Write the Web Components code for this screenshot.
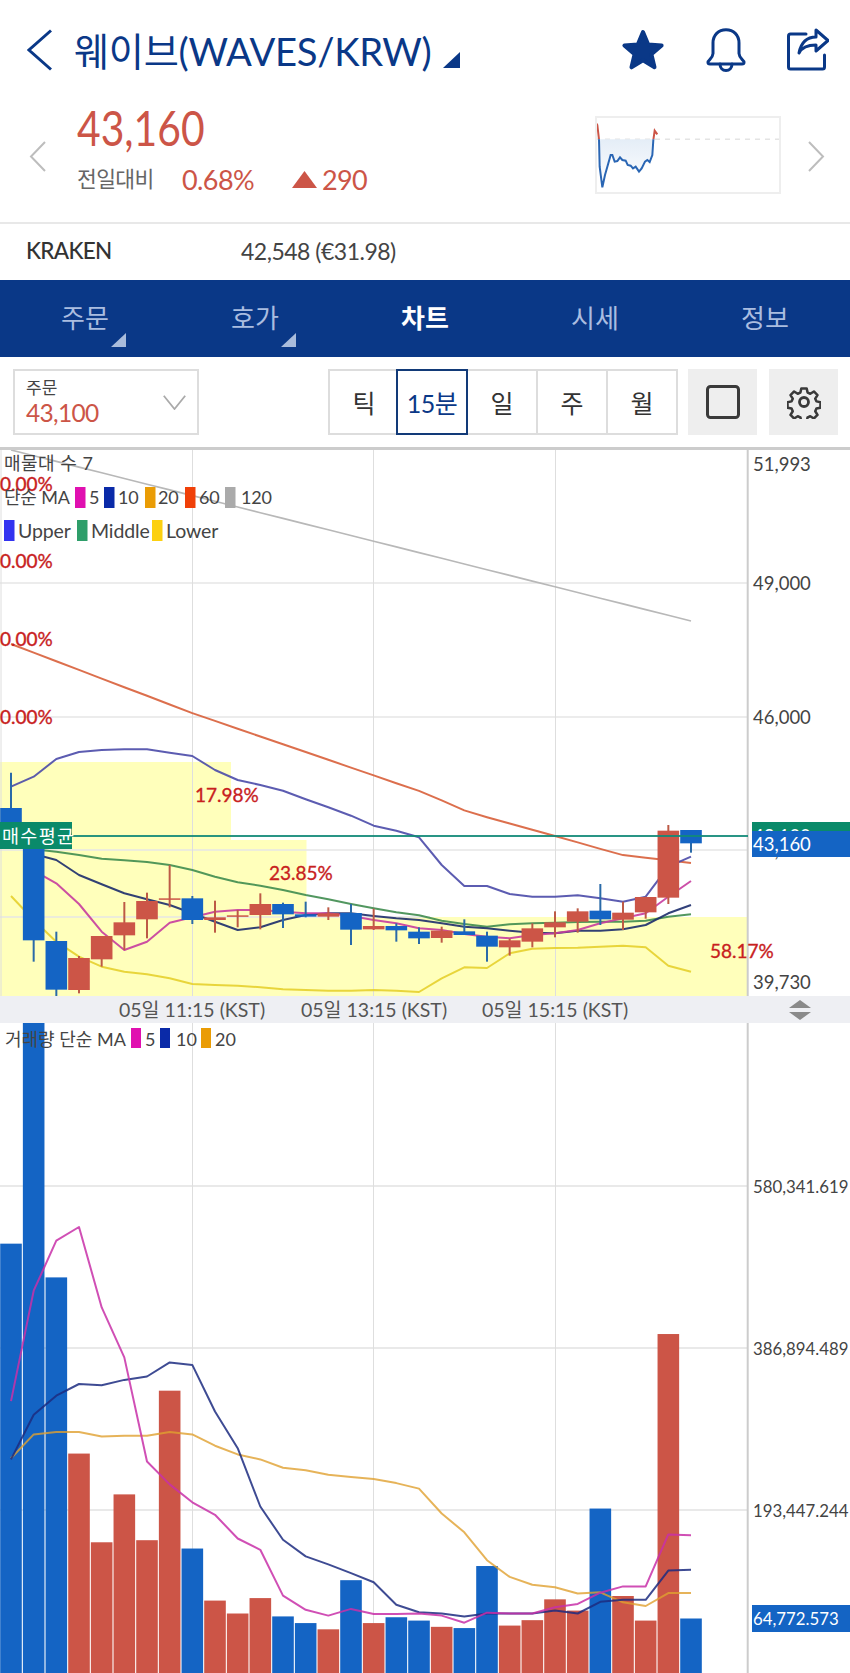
<!DOCTYPE html>
<html lang="ko">
<head>
<meta charset="utf-8">
<title>웨이브 차트</title>
<style>
  html, body { margin: 0; padding: 0; background: #fff; }
  body { width: 850px; height: 1673px; overflow: hidden; font-family: Lato, "Noto Sans CJK KR", sans-serif; }
</style>
</head>
<body>
<coin-header name="웨이브(WAVES/KRW)"></coin-header>
<price-summary></price-summary>
<exchange-row exchange="KRAKEN" value="42,548 (€31.98)"></exchange-row>
<tab-nav></tab-nav>
<chart-toolbar></chart-toolbar>
<price-chart></price-chart>
<time-strip></time-strip>
<volume-chart></volume-chart>

<script>
const FONT = 'Lato, "Noto Sans CJK KR", sans-serif';
const RED = '#cc5547', BLUE = '#1464c4', NAVY = '#0a3887';
const cx = i => 11 + 22.667 * i;

function define(name, render) {
  customElements.define(name, class extends HTMLElement {
    connectedCallback() {
      if (this.shadowRoot) return;
      this.attachShadow({ mode: 'open' }).innerHTML = render(this);
    }
  });
}

define('coin-header', el => `
<style>
  :host { display: flex; align-items: center; height: 100px; padding: 0 21px 0 27px; box-sizing: border-box; color: ${NAVY}; font-family: ${FONT}; }
  .title { margin-left: 22px; font-size: 38.2px; line-height: 44px; letter-spacing: -.3px; white-space: nowrap; position: relative; top: 1px; }
  .tri { margin: 19px 0 0 11px; }
  .icons { margin-left: auto; display: flex; align-items: center; gap: 41px; }
  svg { display: block; }
</style>
<svg width="25" height="42" viewBox="0 0 25 42" fill="none" stroke="${NAVY}" stroke-width="3"><path d="M24 1.5 2 21l22 19.5"/></svg>
<span class="title">${el.getAttribute('name')}</span>
<svg class="tri" width="17" height="16" viewBox="0 0 17 16"><path d="M17 0v16H0z" fill="${NAVY}"/></svg>
<div class="icons">
  <svg width="44" height="44" viewBox="0 0 44 44"><path d="M22 4 27.2 16.4 40.6 17.5 30.4 26.2 33.5 39.3 22 32.4 10.5 39.3 13.6 26.2 3.4 17.5 16.8 16.4z" fill="${NAVY}" stroke="${NAVY}" stroke-width="4" stroke-linejoin="round"/></svg>
  <svg width="40" height="44" viewBox="0 0 40 44" fill="none" stroke="${NAVY}" stroke-width="3" stroke-linecap="round" stroke-linejoin="round"><path d="M2 34.5c0-3 4.5-3 5-9V15C7 7 12.5 1.8 20 1.8S33 7 33 15v10.5c.5 6 5 6 5 9 0 1-.8 1.5-2 1.5H4c-1.2 0-2-.5-2-1.5z"/><path d="M14 36c0 4 2.5 6.5 6 6.5s6-2.5 6-6.5"/></svg>
  <svg width="42" height="44" viewBox="0 0 42 44" fill="none" stroke="${NAVY}" stroke-width="3" stroke-linecap="round" stroke-linejoin="round"><path d="M19 6H3.5C2.2 6 1.5 6.8 1.5 8v31c0 1.2.7 2 2 2h32c1.2 0 2-.8 2-2V27"/><path d="M12 25C14 15 20 9 29 9V2L41 12.5 29 23v-6C21 17 15 19 12 25z"/></svg>
</div>`);

define('price-summary', () => `
<style>
  :host { display: flex; align-items: center; height: 124px; box-sizing: border-box; font-family: ${FONT}; border-bottom: 2px solid #e8e8e8; padding: 0 25px 10px 29px; }
  .col { margin: -15px 0 0 31px; display: flex; flex-direction: column; gap: 11px; }
  .price { color: ${RED}; font-size: 48px; line-height: 50px; font-weight: 400; transform: scaleX(.85); transform-origin: left center; }
  .sub { display: flex; align-items: center; height: 30px; color: ${RED}; font-size: 27px; font-weight: 400; }
  .lab { color: #666; font-size: 21.5px; width: 105px; letter-spacing: -.6px; position: relative; top: -2px; }
  .pct { width: 110px; letter-spacing: -.6px; }
  .up { margin-right: 5px; }
  .mini { margin-left: auto; margin-right: 27px; margin-top: -2px; display: block; }
  svg { display: block; }
</style>
<svg width="17" height="31" viewBox="0 0 17 31" fill="none" stroke="#bdbdbd" stroke-width="2"><path d="M16 1 2 15.5 16 30"/></svg>
<div class="col">
  <div class="price">43,160</div>
  <div class="sub"><span class="lab">전일대비</span><span class="pct">0.68%</span>
    <svg class="up" width="25" height="17" viewBox="0 0 25 17"><path d="M12.5 0 25 17H0z" fill="${RED}"/></svg><span style="letter-spacing:-.6px">290</span></div>
</div>
<sparkline-box class="mini"></sparkline-box>
<svg width="17" height="31" viewBox="0 0 17 31" fill="none" stroke="#bdbdbd" stroke-width="2"><path d="M1 1 15 15.5 1 30"/></svg>`);

define('sparkline-box', () => {
  const p = [[80,68],[85,75],[90,118],[92,200],[100,262],[108,225],[118,190],[125,165],[130,165],[137,185],[145,183],[153,172],[160,180],[170,182],[176,195],[185,197],[192,205],[200,200],[210,215],[218,205],[228,185],[235,180],[242,186],[250,165],[253,120],[257,92],[265,103]]
    .map(([x, y]) => [(x - 78) / 3, (y - 48) / 3]);
  const pts = p.map(q => q.join(',')).join(' ');
  return `
<style>:host { display: block; width: 186px; height: 78px; box-sizing: border-box; border: 2px solid #eee; } svg { display: block; }</style>
<svg width="182" height="74" viewBox="2 2 182 74">
  <defs>
    <linearGradient id="g" x1="0" y1="0" x2="0" y2="1"><stop offset="0" stop-color="#dbe7f4"/><stop offset="1" stop-color="#fff"/></linearGradient>
    <clipPath id="above"><rect x="0" y="0" width="186" height="23.3"/></clipPath>
    <clipPath id="below"><rect x="0" y="23.3" width="186" height="60"/></clipPath>
  </defs>
  <line x1="0" x2="186" y1="23.3" y2="23.3" stroke="#e4e4e4" stroke-width="1.5" stroke-dasharray="5 5"/>
  <polygon points="${pts}" fill="url(#g)" clip-path="url(#below)"/>
  <polyline points="${pts}" fill="none" stroke="${RED}" stroke-width="2" clip-path="url(#above)"/>
  <polyline points="${pts}" fill="none" stroke="#2a66b4" stroke-width="2" clip-path="url(#below)"/>
</svg>`;
});

define('exchange-row', el => `
<style>
  :host { display: flex; align-items: center; height: 56px; box-sizing: border-box; padding: 0 0 3px 26px; color: #333; font-family: ${FONT}; font-size: 22.5px; letter-spacing: -.7px; }
  b { font-weight: 500; width: 215px; }
  span { color: #444; font-weight: 400; font-size: 23px; letter-spacing: -.5px; }
</style>
<b>${el.getAttribute('exchange')}</b><span>${el.getAttribute('value')}</span>`);

define('tab-nav', () => {
  const tabs = [['주문', 1], ['호가', 1], ['차트', 0, 1], ['시세'], ['정보']];
  return `
<style>
  :host { display: grid; grid-template-columns: repeat(5, 1fr); height: 77px; background: ${NAVY}; font-family: ${FONT}; }
  div { position: relative; display: flex; justify-content: center; padding-top: 17px; box-sizing: border-box; color: #aabde0; font-size: 26px; line-height: 42px; height: 77px; }
  div.on { color: #fff; font-weight: 700; }
  svg { position: absolute; left: 111px; top: 53px; }
</style>
${tabs.map(t => `<div class="${t[2] ? 'on' : ''}">${t[0]}${t[1] ? '<svg width="15" height="14" viewBox="0 0 15 14"><path d="M15 0v14H0z" fill="#a9bcdc"/></svg>' : ''}</div>`).join('')}`;
});

define('chart-toolbar', () => `
<style>
  :host { display: flex; align-items: center; height: 93px; box-sizing: border-box; padding: 2px 12px 2px 13px; border-bottom: 3px solid #ccc; font-family: ${FONT}; }
  .sel { position: relative; width: 186px; height: 66px; box-sizing: border-box; border: 2px solid #ddd; padding: 7px 0 0 11px; }
  .sel small { display: block; font-size: 17px; line-height: 20px; color: #444; }
  .sel span { display: block; font-size: 24.5px; line-height: 30px; color: ${RED}; font-weight: 400; letter-spacing: -.7px; }
  .sel svg { position: absolute; right: 11px; top: 24px; }
  .seg { margin-left: auto; display: flex; width: 350px; height: 66px; box-sizing: border-box; border: 2px solid #ddd; }
  .seg span { flex: 1; display: flex; align-items: center; justify-content: center; font-size: 25px; color: #333; border-left: 2px solid #ddd; box-sizing: border-box; }
  .seg span:first-child { border-left: 0; }
  .seg span.on { color: ${NAVY}; outline: 2px solid #123a78; outline-offset: 0; position: relative; border-left: 0; letter-spacing: -.5px; }
  .btn { width: 69px; height: 66px; background: #eee; margin-left: 12px; display: flex; align-items: center; justify-content: center; }
  .seg + .btn { margin-left: 10px; }
</style>
<div class="sel"><small>주문</small><span>43,100</span>
  <svg width="23" height="15" viewBox="0 0 23 15" fill="none" stroke="#aaa" stroke-width="1.8"><path d="M.8.8 11.5 14 22.2.8"/></svg></div>
<div class="seg"><span>틱</span><span class="on">15분</span><span>일</span><span>주</span><span>월</span></div>
<div class="btn"><svg width="34" height="34" viewBox="0 0 34 34"><rect x="1.5" y="1.5" width="31" height="31" rx="3" fill="none" stroke="#3a3a3a" stroke-width="3"/></svg></div>
<div class="btn"><svg width="34" height="34" viewBox="0 0 34 34" fill="none" stroke="#3a3a3a" stroke-width="2.8" stroke-linejoin="round"><circle cx="17" cy="17" r="4.5"/><path d="M14 2h6l1 4.500 3 1.300 4-2.500 4 4-2.500 4 1.300 3 4.500 1v6l-4.500 1-1.300 3 2.500 4-4 4-4-2.500-3 1.300-1 4.500h-6l-1-4.500-3-1.300-4 2.500-4-4 2.500-4-1.300-3-4.500-1v-6l4.500-1 1.300-3-2.500-4 4-4 4 2.500 3-1.300z" transform="translate(1.700 1.700) scale(.9)"/></svg></div>`);

const priceY = z => 580 + z / 3;
const line = (ys, color, w = 2, start = 0, op = .9) =>
  `<polyline fill="none" stroke="${color}" stroke-width="${w}" stroke-opacity="${op}" stroke-linejoin="round" points="${ys.map((y, i) => cx(i + start).toFixed(1) + ',' + y.toFixed(1)).join(' ')}"/>`;

define('price-chart', () => {
  const c = [
    ['b',578,684,800,800],['b',780,790,1081,1145],['b',1055,1083,1229,1248],['r',1128,1134,1230,1240],
    ['r',1068,1068,1138,1160],['r',966,1027,1066,1110],['r',938,963,1018,1075],['r',855,955,959,982],
    ['b',948,955,1020,1032],['r',962,1012,1020,1058],['r',990,1006,1010,1042],['r',940,972,1005,1048],
    ['b',968,972,1003,1044],['b',965,1003,1010,1012],['r',982,1000,1010,1020],['b',972,999,1049,1095],
    ['r',986,1038,1048,1050],['b',1030,1038,1051,1085],['b',1042,1055,1075,1092],['r',1040,1052,1074,1088],
    ['b',1018,1054,1065,1065],['b',1055,1067,1100,1145],['r',1076,1081,1102,1127],['r',1030,1045,1085,1102],
    ['r',994,1027,1042,1072],['r',985,994,1025,1058],['b',912,992,1018,1035],['r',965,998,1019,1050],
    ['r',950,951,997,1016],['r',735,752,953,972],['b',750,750,790,818]];
  const candles = c.map(([t, w1, b1, b2, w2], i) => {
    const x = cx(i), col = t === 'b' ? BLUE : RED, wick = t === 'b' ? '#2a6aa8' : '#bd5a46';
    return `<line x1="${x}" x2="${x}" y1="${priceY(w1)}" y2="${priceY(w2)}" stroke="${wick}" stroke-width="2"/>
      <rect x="${x - 10.8}" y="${priceY(b1)}" width="21.6" height="${Math.max((b2 - b1) / 3, 1.5)}" fill="${col}"/>`;
  }).join('');
  const gray = line(Array.from({ length: 31 }, (_, i) => 450 + (cx(i) - 11) * 0.2515), '#b8b8b8', 1.6, 0, 1);
  const ma60 = Array.from({ length: 31 }, (_, i) => {
    const x = cx(i), pts = [[11,644],[192,713],[425,793],[468,812],[555,836],[622,855],[657,859],[691,863]];
    for (let k = 0; k < pts.length - 1; k++) if (x <= pts[k + 1][0]) return pts[k][1] + (pts[k + 1][1] - pts[k][1]) * (x - pts[k][0]) / (pts[k + 1][0] - pts[k][0]);
    return 863;
  });
  const z = a => a.map(priceY);
  const upper = z([620,590,537,516,510,508,508,518,528,570,600,615,632,658,682,707,737,752,772,855,918,918,942,950,950,946,955,965,950,860,830]);
  const middle = z([808,815,825,836,841,846,855,870,890,907,917,930,945,958,972,985,997,1006,1022,1032,1040,1033,1030,1028,1026,1025,1025,1022,1010,1003]);
  const ma10 = z([822,840,885,913,940,958,975,1000,1025,1050,1042,1020,1005,1000,1000,1008,1015,1020,1030,1040,1045,1052,1058,1060,1052,1052,1048,1035,1000,975]);
  const ma5 = z([872,910,972,1055,1110,1085,1028,1012,995,990,990,995,1000,1000,1008,1020,1030,1045,1050,1062,1070,1075,1065,1060,1050,1030,1015,1000,950,903]);
  const lower = z([948,1020,1085,1130,1160,1175,1183,1195,1212,1215,1217,1222,1228,1230,1232,1232,1230,1232,1236,1195,1162,1164,1120,1106,1104,1103,1100,1097,1102,1157,1175]);
  const sw = (x, col, y = 487, h = 21) => `<rect x="${x}" y="${y}" width="10.5" height="${h}" fill="${col}"/>`;
  const t = (x, y, s, cls = 'tx') => `<text x="${x}" y="${y}" class="${cls}">${s}</text>`;
  return `
<style>
  :host { display: block; height: 546px; overflow: hidden; font-family: ${FONT}; }
  svg { display: block; }
  text { dominant-baseline: central; font-family: ${FONT}; }
  .tx { fill: #444; font-size: 18px; letter-spacing: -.2px; }
  .k { fill: #444; font-size: 18px; letter-spacing: .5px; }
  .tl { fill: #444; font-size: 19.5px; letter-spacing: -.1px; }
  .ax { fill: #444; font-size: 18.5px; }
  .pc { fill: #c8211e; stroke: #c8211e; stroke-width: .35px; font-size: 19px; }
  .wh { fill: #fff; font-size: 18.5px; }
  .av { fill: #fff; font-size: 18.5px; letter-spacing: 1.3px; }
</style>
<svg width="850" height="546" viewBox="0 450 850 546">
  <rect x="0" y="762" width="231" height="78" fill="#ffffbb"/>
  <rect x="0" y="840" width="306.5" height="77" fill="#ffffbb"/>
  <rect x="0" y="917" width="747" height="80" fill="#ffffbb"/>
  <g stroke="#e6e6e6" stroke-width="1.5">
    <line x1="0" x2="748" y1="583" y2="583"/><line x1="0" x2="748" y1="717" y2="717"/><line x1="0" x2="748" y1="850" y2="850"/><line x1="0" x2="430" y1="917" y2="917"/>
  </g>
  <g stroke="#dedede" stroke-width="1">
    <line x1="1" x2="1" y1="450" y2="996"/>
    <line x1="192.5" x2="192.5" y1="450" y2="996"/><line x1="373.5" x2="373.5" y1="450" y2="996"/><line x1="555.5" x2="555.5" y1="450" y2="996"/>
  </g>
  <line x1="747.7" x2="747.7" y1="448" y2="996" stroke="#ccc" stroke-width="2"/>
  ${gray}
  ${line(ma60, '#d85f3a')}
  ${line(upper, '#4a4aa8')}
  ${line(middle, '#3f8c4f', 2, 1)}
  ${line(ma10, '#1c2c6c', 2, 1)}
  ${line(ma5, '#c63c9e', 2, 1)}
  ${line(lower, '#e6d02e')}
  ${candles}
  <line x1="70" x2="748" y1="836" y2="836" stroke="#128a78" stroke-width="2" stroke-opacity=".9"/>
  <rect x="0" y="822" width="72" height="27" fill="#0a8a6a"/>
  ${t(2, 836, '매수평균', 'av')}
  ${t(4, 463, '매물대 수 7', 'k')}
  ${t(0, 483, '0.00%', 'pc')}
  ${t(4, 497, '단순 MA')}
  ${sw(75, '#e010b0')}${t(89, 497, '5')}
  ${sw(104, '#0a2aa8')}${t(118, 497, '10')}
  ${sw(145, '#ea9c05')}${t(158, 497, '20')}
  ${sw(185, '#f04008')}${t(199, 497, '60')}
  ${sw(225, '#aaa')}${t(241, 497, '120')}
  ${sw(4, '#3333f0', 520)}${t(18, 530, 'Upper', 'tl')}
  ${sw(77, '#2e9e6a', 520)}${t(91, 530, 'Middle', 'tl')}
  ${sw(152, '#fcd010', 520)}${t(166, 530, 'Lower', 'tl')}
  ${t(0, 560, '0.00%', 'pc')}${t(0, 638, '0.00%', 'pc')}${t(0, 716, '0.00%', 'pc')}
  ${t(195, 794, '17.98%', 'pc')}${t(269, 872, '23.85%', 'pc')}${t(710, 950, '58.17%', 'pc')}
  ${t(753, 464, '51,993', 'ax')}${t(753, 583, '49,000', 'ax')}${t(753, 717, '46,000', 'ax')}${t(753, 850, '43,000', 'ax')}${t(753, 982, '39,730', 'ax')}
  <rect x="752" y="822" width="98" height="27" fill="#0a8a6a"/>
  ${t(753, 836, '43,100', 'wh')}
  <rect x="752" y="831" width="98" height="26" fill="${BLUE}"/>
  ${t(753, 844, '43,160', 'wh')}
</svg>`;
});

define('time-strip', () => `
<style>
  :host { display: block; position: relative; height: 27px; background: #eeeff3; color: #555; font-family: ${FONT}; font-size: 19.5px; line-height: 27px; }
  span { position: absolute; top: 0; white-space: nowrap; }
  svg { position: absolute; left: 789px; top: 4px; }
</style>
<span style="left:119px">05일 11:15 (KST)</span><span style="left:301px">05일 13:15 (KST)</span><span style="left:482px">05일 15:15 (KST)</span>
<svg width="22" height="20" viewBox="0 0 22 20"><path d="M11 0 22 8H0zM0 12h22L11 20z" fill="#8a8a8a"/></svg>`);

define('volume-chart', () => {
  const vy = z => 1020 + z / 2.401;
  const bars = [[ 'b',537],['b',0],['b',618],['r',1041],['r',1254],['r',1139],['r',1249],['r',890],['b',1269],['r',1394],['r',1425],['r',1388],['b',1432],['b',1448],['r',1463],['b',1345],['r',1448],['b',1434],['b',1442],['r',1457],['b',1460],['b',1311],['r',1454],['r',1441],['r',1391],['r',1418],['b',1173],['r',1383],['r',1442],['r',754],['b',1437]]
    .map(([t, z], i) => { const y = vy(z); return `<rect x="${cx(i) - 10.8}" y="${y}" width="21.6" height="${1673 - y}" fill="${t === 'b' ? BLUE : RED}"/>`; }).join('');
  const m5 = [915,650,530,497,690,810,1060,1115,1158,1188,1245,1272,1382,1416,1430,1414,1426,1426,1425,1430,1447,1423,1425,1425,1410,1402,1375,1360,1360,1235,1237].map(vy);
  const m10 = [1055,948,902,874,877,864,856,822,828,940,1028,1168,1248,1288,1307,1328,1350,1404,1422,1425,1432,1425,1425,1425,1418,1425,1397,1392,1392,1322,1320].map(vy);
  const m20 = [1052,995,989,989,1000,998,998,989,995,1022,1043,1055,1075,1081,1092,1097,1102,1112,1125,1185,1230,1297,1337,1356,1362,1377,1374,1398,1407,1376,1376].map(vy);
  const sw = (x, c) => `<rect x="${x}" y="1028" width="10" height="20" fill="${c}"/>`;
  const t = (x, y, s, cls = 'tx') => `<text x="${x}" y="${y}" class="${cls}">${s}</text>`;
  return `
<style>
  :host { display: block; height: 650px; overflow: hidden; font-family: ${FONT}; }
  svg { display: block; }
  text { dominant-baseline: central; font-family: ${FONT}; }
  .tx { fill: #444; font-size: 18px; }
  .ax { fill: #444; font-size: 16.8px; }
  .wh { fill: #fff; font-size: 16.8px; }
</style>
<svg width="850" height="650" viewBox="0 1023 850 650">
  <g stroke="#e2e2e2" stroke-width="1.5">
    <line x1="0" x2="748" y1="1186" y2="1186"/><line x1="0" x2="748" y1="1348" y2="1348"/><line x1="0" x2="748" y1="1510" y2="1510"/>
  </g>
  <g stroke="#dedede" stroke-width="1">
    <line x1="192.5" x2="192.5" y1="1023" y2="1673"/><line x1="373.5" x2="373.5" y1="1023" y2="1673"/><line x1="555.5" x2="555.5" y1="1023" y2="1673"/>
  </g>
  <line x1="747.7" x2="747.7" y1="1023" y2="1673" stroke="#ccc" stroke-width="2"/>
  ${bars}
  ${line(m20, '#e0a030', 2, 0, .8)}
  ${line(m10, '#1c2c80', 2, 0, .85)}
  ${line(m5, '#c830a8', 2, 0, .85)}
  ${t(5, 1039, '거래량 단순 MA')}
  ${sw(131, '#e010b0')}${t(145, 1039, '5')}
  ${sw(160, '#0a2aa8')}${t(176, 1039, '10')}
  ${sw(201, '#ea9c05')}${t(215, 1039, '20')}
  ${t(753, 1186, '580,341.619', 'ax')}${t(753, 1348, '386,894.489', 'ax')}${t(753, 1510, '193,447.244', 'ax')}
  <rect x="752" y="1605" width="98" height="27" fill="${BLUE}"/>
  ${t(753, 1618.5, '64,772.573', 'wh')}
</svg>`;
});
</script>
</body>
</html>
